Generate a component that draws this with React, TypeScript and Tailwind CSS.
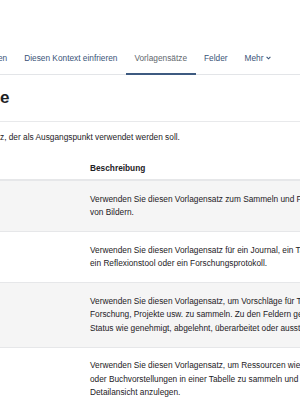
import { ReactNode } from 'react';

function NavLink({ children, active, first }: { children: ReactNode; active?: boolean; first?: boolean }) {
    return (
        <a
            className={
                'flex items-start whitespace-nowrap pt-[9.75px] -mb-px ' +
                (first ? '-ml-[2px] pr-[8.5px] ' : 'px-[8.5px] ') +
                (active ? 'border-b-2 border-[#3d5a80] text-[#62676d]' : 'border-b-2 border-transparent text-[#3a5478]')
            }
        >
            {children}
        </a>
    );
}

const rows: { lines: string[]; striped: boolean }[] = [
    {
        lines: ['Verwenden Sie diesen Vorlagensatz zum Sammeln und Präsentieren', 'von Bildern.'],
        striped: true,
    },
    {
        lines: ['Verwenden Sie diesen Vorlagensatz für ein Journal, ein Tagebuch,', 'ein Reflexionstool oder ein Forschungsprotokoll.'],
        striped: false,
    },
    {
        lines: [
            'Verwenden Sie diesen Vorlagensatz, um Vorschläge für Tagungen,',
            'Forschung, Projekte usw. zu sammeln. Zu den Feldern gehören',
            'Status wie genehmigt, abgelehnt, überarbeitet oder ausstehend.',
        ],
        striped: true,
    },
    {
        lines: [
            'Verwenden Sie diesen Vorlagensatz, um Ressourcen wie Bücher,',
            'oder Buchvorstellungen in einer Tabelle zu sammeln und eine',
            'Detailansicht anzulegen.',
        ],
        striped: false,
    },
];

export default function App(): JSX.Element {
    return (
        <div className="w-[300px] h-[400px] overflow-hidden bg-white font-['Liberation_Sans',Arial,sans-serif] text-[8.3px] leading-[12.5px] text-[#1d2125]">
            {/* Secondary navigation */}
            <nav className="mt-[42px] flex h-[33px] border-b border-[#e3e5e8]">
                <NavLink first>en</NavLink>
                <NavLink>Diesen Kontext einfrieren</NavLink>
                <NavLink active>Vorlagensätze</NavLink>
                <NavLink>Felder</NavLink>
                <NavLink>
                    Mehr
                    <svg className="ml-[2.5px] mt-[4.5px]" width="5" height="4" viewBox="0 0 5 4" fill="none">
                        <polyline points="0.6,0.8 2.5,2.8 4.4,0.8" stroke="#3a5478" strokeWidth="1.1" />
                    </svg>
                </NavLink>
            </nav>

            {/* Heading */}
            <div className="mt-[13px] pb-[13px] border-b border-[#e8e9eb]">
                <h2 className="text-[17px] leading-[20px] font-bold">e</h2>
            </div>

            <p className="mt-[8.5px] whitespace-nowrap">z, der als Ausgangspunkt verwendet werden soll.</p>

            {/* Table */}
            <div className="mt-[19px] pl-[90px] pb-[4.5px] border-b-2 border-[#e6e7e9] font-bold">Beschreibung</div>
            {rows.map((row, i) => (
                <div
                    key={i}
                    className={
                        'pl-[90px] py-[11.5px] leading-[13.5px] border-b border-[#e6e7e9] ' +
                        (row.striped ? 'bg-[#f5f5f5]' : 'bg-white')
                    }
                >
                    {row.lines.map((line, j) => (
                        <div key={j} className="whitespace-nowrap">
                            {line}
                        </div>
                    ))}
                </div>
            ))}
        </div>
    );
}
